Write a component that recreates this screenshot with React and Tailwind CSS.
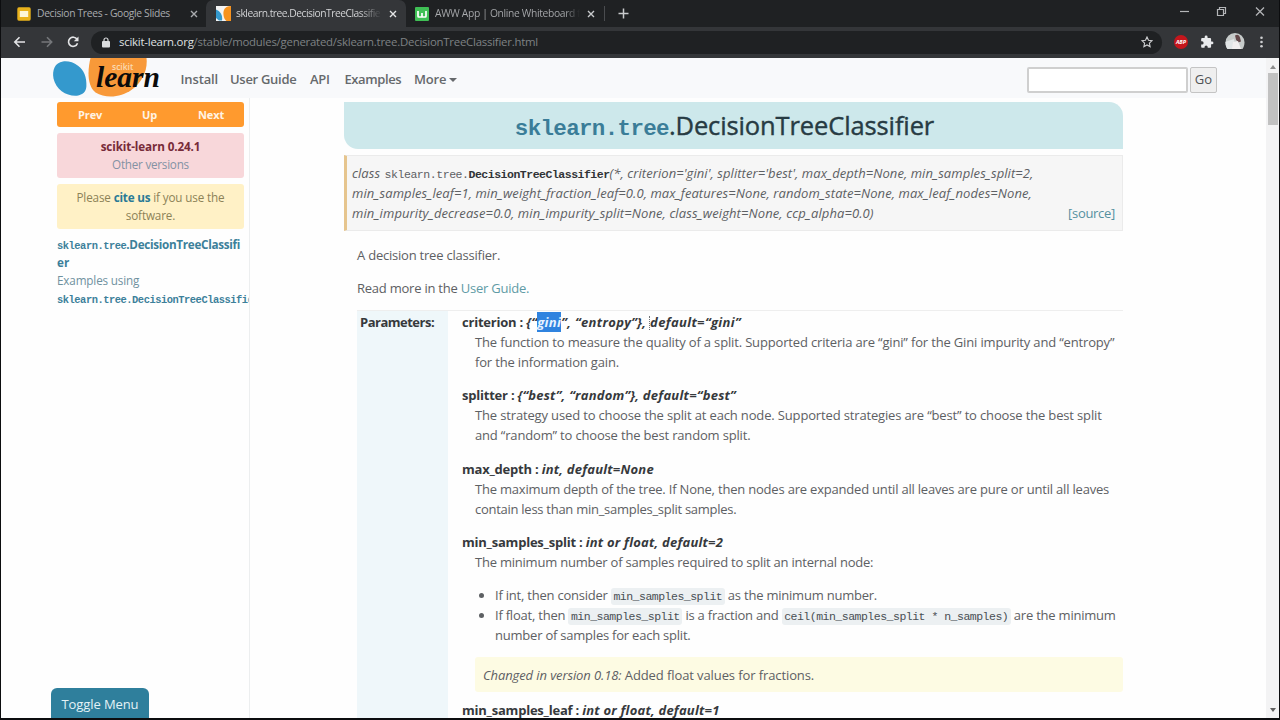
import React from "react";

const mono = "font-['Liberation_Mono',monospace]";

function Slides() {
  return (
    <svg width="14" height="14" viewBox="0 0 14 14" className="shrink-0">
      <rect x="0.3" y="0.3" width="13.4" height="13.4" rx="1.6" fill="#e9b21c" />
      <rect x="2.8" y="4" width="8.4" height="6" fill="#fdf6d8" />
    </svg>
  );
}

function SkFavicon() {
  return (
    <svg width="15" height="15" viewBox="0 0 15 15" className="shrink-0">
      <rect width="15" height="15" fill="#f4f4f4" />
      <path d="M0 3.5C4 5 7 9 6 14.5H3L0 12z" fill="#3499cd" />
      <path d="M15 0C8.500 0 7 4.500 7.500 9c.3 3 1.500 5 3 6H15V0z" fill="#f7931e" />
    </svg>
  );
}

function AwwFavicon() {
  return (
    <svg width="14" height="14" viewBox="0 0 14 14" className="shrink-0">
      <rect width="14" height="14" rx="1" fill="#3fbf55" />
      <path d="M3 4v5.200q0 .8.8.8h6.400q.8 0 .8-.8V4M7 6v4" fill="none" stroke="#fff" strokeWidth="1.700" />
    </svg>
  );
}

function Close({ color = "#c8cacc" }) {
  return (
    <svg width="8" height="8" viewBox="0 0 8 8" className="shrink-0">
      <path d="M1 1l6 6M7 1L1 7" stroke={color} strokeWidth="1.400" />
    </svg>
  );
}

function Tabs() {
  return (
    <div className="flex h-[27px] items-stretch bg-[#1f2123] text-[10.3px] text-[#a9abae]">
      <div className="flex w-[205px] items-center pl-[16px]">
        <Slides />
        <span className="ml-[6px] w-[153px] whitespace-nowrap tracking-[-0.33px]">Decision Trees - Google Slides</span>
        <Close color="#a9abae" />
      </div>
      <div className="flex w-[200px] items-center rounded-t-[7px] bg-[#343639] pl-[10px] text-[#d6d7d9]">
        <SkFavicon />
        <span className="ml-[5px] w-[146px] overflow-hidden whitespace-nowrap bg-gradient-to-r from-[#dcdddf] from-85% to-[#343639] bg-clip-text tracking-[-0.5px] text-transparent">
          sklearn.tree.DecisionTreeClassifie
        </span>
        <span className="ml-[7px] flex"><Close color="#e4e5e6" /></span>
      </div>
      <div className="flex w-[198px] items-center pl-[9px]">
        <AwwFavicon />
        <span className="ml-[6px] w-[145px] overflow-hidden whitespace-nowrap bg-gradient-to-r from-[#a9abae] from-90% to-[#1f2123] bg-clip-text tracking-[-0.34px] text-transparent">
          AWW App | Online Whiteboard f
        </span>
        <span className="ml-[7px] flex"><Close /></span>
      </div>
      <div className="flex w-[36px] items-center">
        <span className="h-[15px] w-px bg-[#4a4c4f]" />
        <svg width="11" height="11" viewBox="0 0 11 11" className="ml-[13px]">
          <path d="M5.500 .5v10M.5 5.500h10" stroke="#c8cacc" strokeWidth="1.500" />
        </svg>
      </div>
      <svg width="90" height="14" viewBox="0 0 90 14" className="mt-[5px] ml-auto mr-[9px]" fill="none" stroke="#b4b6b8">
        <path d="M0 6.500h9" strokeWidth="1.200" />
        <path d="M37.500 4.500h6v6h-6zM39.500 4.500v-2h6v6h-2" strokeWidth="1.200" />
        <path d="M76 2.500l8 8M84 2.500l-8 8" strokeWidth="1.300" />
      </svg>
    </div>
  );
}

function AddressBar() {
  return (
    <div className="flex h-[31px] items-center bg-[#343639] pb-px pl-[12px]">
      <svg width="70" height="14" viewBox="0 0 70 14" fill="none" strokeWidth="1.600" className="shrink-0">
        <path d="M12 7H2M6.500 2.300L1.800 7l4.700 4.700" stroke="#e3e4e6" />
        <path d="M28.500 7h10M34 2.300L38.700 7 34 11.700" stroke="#75777a" />
        <path d="M64 4.300A4.600 4.600 0 1 0 64.500 8.200" stroke="#e3e4e6" />
        <path d="M65.500 1.600v4.700h-4.700z" fill="#e3e4e6" />
      </svg>
      <div className="ml-[8px] flex h-[23px] w-[1071px] items-center rounded-full bg-[#1f2123] pl-[11px]">
        <svg width="8" height="11" viewBox="0 0 8 11" className="shrink-0">
          <rect y="4" width="8" height="6.500" rx="1" fill="#dadcde" />
          <path d="M2 4.500V3a2 2 0 0 1 4 0v1.500" fill="none" stroke="#dadcde" strokeWidth="1.200" />
        </svg>
        <span className="ml-[9px] whitespace-nowrap text-[11.4px] tracking-[-0.23px] text-[#7e8184]">
          <span className="text-[#dfe0e2]">scikit-learn.org</span>/stable/modules/generated/sklearn.tree.DecisionTreeClassifier.html
        </span>
        <svg width="12" height="12" viewBox="0 0 12 12" className="ml-auto mr-[9px]">
          <path d="M6 1l1.500 3.300 3.500.4-2.600 2.400.7 3.500L6 8.900l-3.100 1.700.7-3.500L1 4.700l3.500-.4z" fill="none" stroke="#cdced0" strokeWidth="1.100" />
        </svg>
      </div>
      <div className="ml-[12px] flex size-[14px] items-center justify-center rounded-full bg-[#c4161c] text-[5.5px] font-bold italic text-white">
        ABP
      </div>
      <svg width="14" height="14" viewBox="0 0 24 24" className="ml-[12px]">
        <path d="M20.500 11H19V7c0-1.100-.9-2-2-2h-4V3.500a2.500 2.500 0 0 0-5 0V5H4c-1.100 0-2 .9-2 2v3.800h1.500a2.700 2.700 0 0 1 0 5.400H2V20c0 1.100.9 2 2 2h3.800v-1.500a2.700 2.700 0 0 1 5.400 0V22H17c1.100 0 2-.9 2-2v-4h1.500a2.500 2.500 0 0 0 0-5z" fill="#e9eaec" />
      </svg>
      <svg width="20" height="18" viewBox="0 0 20 18" className="ml-[11px]">
        <defs><clipPath id="avatar"><path d="M10 0a9.500 9.500 0 0 1 9.500 9.500c0 3-1 5-2 6.500H2.500C1.300 14.500.5 12.500.5 9.500A9.500 9.500 0 0 1 10 0z" /></clipPath></defs>
        <g clipPath="url(#avatar)">
          <rect width="20" height="18" fill="#c6cbca" />
          <path d="M0 9L9 6l2 12H0z" fill="#e2e5e6" />
          <path d="M10 2.500q4-2 5 2l1 4-3 1-2-3z" fill="#64484a" />
          <path d="M8 9l5-1 3 8H7z" fill="#f2eeee" />
        </g>
      </svg>
      <svg width="3" height="12" viewBox="0 0 3 12" className="ml-[15px]" fill="#cfd0d2">
        <circle cx="1.500" cy="1.700" r="1.300" /><circle cx="1.500" cy="6" r="1.300" /><circle cx="1.500" cy="10.300" r="1.300" />
      </svg>
    </div>
  );
}

function Logo() {
  return (
    <svg width="112" height="40" viewBox="0 0 112 40" className="shrink-0">
      <path d="M11 3.500C3 4.500 0 12 1.500 20.500 4 32 15 38.500 25 37.700c6-1 9-4 9.400-9.500.5-9-2.400-16-8.400-20.500C21.500 4.300 16 2.900 11 3.500z" fill="#3499cd" />
      <path d="M38.500 0H94.500C96 12 90 24 80 31.500 69 39.500 54 41 43.500 34.500 35 28 35.500 12 38.500 0z" fill="#f89939" />
      <text x="60" y="12" fontSize="8.500" fill="#fbd9b2" className="font-['Open_Sans',sans-serif]">scikit</text>
      <text x="44" y="29" fontSize="29" fontWeight="700" fontStyle="italic" fill="#0b0b0b" textLength="64" lengthAdjust="spacingAndGlyphs" className="font-['Liberation_Serif',serif]">learn</text>
    </svg>
  );
}

function Navbar() {
  return (
    <div className="flex h-[40px] shrink-0 items-center bg-[#f8f9fb] pl-[51px] text-[13px] font-semibold text-[#66696c]">
      <Logo />
      <div className="flex flex-1 items-center pt-[3px]">
        <span className="ml-[16.5px] w-[49.5px] tracking-[-0.13px]">Install</span>
        <span className="w-[80px] whitespace-nowrap tracking-[-0.3px]">User Guide</span>
        <span className="w-[34.5px] tracking-[-0.3px]">API</span>
        <span className="w-[69.5px] tracking-[-0.4px]">Examples</span>
        <span className="tracking-[-0.2px]">More</span>
        <svg width="8" height="4" viewBox="0 0 8 4" className="ml-[3px]"><path d="M0 0h8L4 4z" fill="#66696c" /></svg>
        <div className="ml-auto mr-[49px] flex gap-[2px]">
          <div className="h-[26px] w-[161px] rounded-[2px] border-2 border-[#cfcfcf] bg-white" />
          <div className="flex h-[26px] w-[27px] items-center justify-center rounded-[2px] border-[1.5px] border-[#c4c4c4] bg-[#efefef] text-[13px] font-normal text-[#505254]">Go</div>
        </div>
      </div>
    </div>
  );
}

function Sidebar() {
  return (
    <div className="flex h-[621px] w-[249px] shrink-0 flex-col border-r border-[#eceeef] pl-[56px] pt-[4px] text-[11.7px] leading-[18px]">
      <div className="flex h-[25px] w-[187px] items-center rounded-[3px] bg-[#ff9a2e] text-[11px] font-bold tracking-[-0.1px] text-[#fff3e4]">
        <span className="w-[64px] pl-[21px]">Prev</span>
        <span className="w-[57px] pl-[21px]">Up</span>
        <span className="pl-[20px]">Next</span>
      </div>
      <div className="mt-[6px] h-[45px] w-[187px] rounded-[3px] bg-[#f8d7da] pt-[4px] text-center text-[#8392a4]">
        <div className="font-bold tracking-[-0.12px] text-[#772a38]">scikit-learn 0.24.1</div>
        <div className="tracking-[-0.25px]">Other versions</div>
      </div>
      <div className="mt-[6px] h-[45px] w-[187px] rounded-[3px] bg-[#fff1c6] pt-[4px] text-center tracking-[-0.14px] text-[#8c8257]">
        <div>Please <b className="tracking-[-0.2px] text-[#2a7a96]">cite us</b> if you use the</div>
        <div>software.</div>
      </div>
      <div className="mt-[6px] w-[192px] overflow-hidden whitespace-nowrap text-[#6f919e]">
        <div className="h-[18px] font-bold tracking-[-0.3px] text-[#3c809a]">
          <span className={`${mono} text-[10.4px] leading-none tracking-[-0.46px]`}>sklearn.tree</span>.DecisionTreeClassifi
        </div>
        <div className="font-bold text-[#3c809a]">er</div>
        <div className="tracking-[-0.15px]">Examples using</div>
        <div className={`${mono} pt-[2px] text-[10.4px] font-bold tracking-[-0.46px] text-[#3c809a]`}>sklearn.tree.DecisionTreeClassifi<span className="text-[#8fb4c2]">e</span></div>
      </div>
      <div className="-ml-[6px] mt-auto flex h-[31px] w-[98px] items-center justify-center rounded-t-[6px] bg-[#2f7f9c] text-[13px] tracking-[-0.1px] text-[#e4f2f6]">
        Toggle Menu
      </div>
    </div>
  );
}

function Code({ children }) {
  return <code className={`${mono} rounded-[3px] bg-[#ecf0f2] px-[2.5px] py-[2px] text-[11.5px] leading-none tracking-[-0.5px] text-[#494f54]`}>{children}</code>;
}

function Param({ name, type, typeClass = "tracking-[0.21px]", children }) {
  return (
    <div className="mb-[13.4px] whitespace-nowrap">
      <div className="font-bold tracking-[-0.22px] text-[#36393c]">{name} : <i className={typeClass}>{type}</i></div>
      <div className="pl-[13px]">{children}</div>
    </div>
  );
}

function Signature() {
  return (
    <div className="mt-[6px] h-[76px] whitespace-nowrap border border-l-[3px] border-[#ebebeb] border-l-[#e6c58e] bg-[#f6f6f6] pl-[5px] pt-[7px] italic">
      <div className="h-[20px] tracking-[0.07px]">
        <span className="mr-px">class</span> <span className={`${mono} text-[11.5px] leading-none not-italic tracking-[-0.44px]`}>sklearn.tree.</span>
        <b className={`${mono} text-[11.5px] leading-none not-italic tracking-[-0.49px] text-[#303336]`}>DecisionTreeClassifier</b>
        (*, criterion='gini', splitter='best', max_depth=None, min_samples_split=2,
      </div>
      <div className="tracking-[0.08px]">min_samples_leaf=1, min_weight_fraction_leaf=0.0, max_features=None, random_state=None, max_leaf_nodes=None,</div>
      <div className="flex justify-between pr-[7px] tracking-[0.1px]">
        <span>min_impurity_decrease=0.0, min_impurity_split=None, class_weight=None, ccp_alpha=0.0)</span>
        <span className="not-italic tracking-[-0.3px] text-[#55909f]">[source]</span>
      </div>
    </div>
  );
}

function Article() {
  return (
    <div className="ml-[94px] h-[621px] w-[779px] overflow-hidden pt-[4px] text-[13px] leading-[20px] text-[#5d6063]">
      <div className="flex h-[47px] items-center justify-center whitespace-nowrap rounded-bl-[14px] rounded-tr-[14px] bg-[#cde8eb] pr-[18px] pt-[5px] text-[25.5px] text-[#273b43]">
        <div>
          <span className={`${mono} text-[22.5px] font-bold leading-none tracking-[-0.66px] text-[#3a7d98]`}>sklearn.tree</span>
          <span className="tracking-[-0.12px] [-webkit-text-stroke:0.4px_#273b43]">.DecisionTreeClassifier</span>
        </div>
      </div>
      <Signature />
      <div className="ml-[13px] mt-[14px] tracking-[-0.22px]">A decision tree classifier.</div>
      <div className="ml-[13px] mt-[13px] tracking-[-0.23px]">Read more in the <span className="text-[#609ba5]">User Guide.</span></div>
      <div className="ml-[13px] mt-[12px] flex h-[420px] border-t border-[#eeeeee]">
        <div className="w-[91px] bg-[#eff7fa] pl-[3px] pt-[1px] font-bold tracking-[-0.5px] text-[#36393c]">Parameters:</div>
        <div className="w-[675px] pl-[14px] pt-[1px] tracking-[-0.17px]">
          <Param
            name="criterion"
            typeClass="tracking-[0.35px]"
            type={<>{"{“"}<span className="bg-[#2f83df] py-[1px] text-[#e8f3ff]">gini</span>{"”, “entropy”}, "}<span className="relative">d<span className="absolute -left-px top-[3px] h-[14px] border-l border-dotted border-[#707376]" /></span>{"efault=“gini”"}</>}
          >
            <div className="tracking-[-0.16px]">The function to measure the quality of a split. Supported criteria are “gini” for the Gini impurity and “entropy”</div>
            <div>for the information gain.</div>
          </Param>
          <Param name="splitter" typeClass="tracking-[0.24px]" type="{“best”, “random”}, default=“best”">
            <div className="tracking-[-0.15px]">The strategy used to choose the split at each node. Supported strategies are “best” to choose the best split</div>
            <div>and “random” to choose the best random split.</div>
          </Param>
          <Param name="max_depth" type="int, default=None">
            <div className="tracking-[-0.2px]">The maximum depth of the tree. If None, then nodes are expanded until all leaves are pure or until all leaves</div>
            <div className="tracking-[-0.27px]">contain less than min_samples_split samples.</div>
          </Param>
          <Param name="min_samples_split" type="int or float, default=2">
            <div className="tracking-[-0.22px]">The minimum number of samples required to split an internal node:</div>
            <ul className="mt-[13px] list-disc pl-[20px] tracking-[-0.22px]">
              <li className="h-[20px]">If int, then consider <Code>min_samples_split</Code> as the minimum number.</li>
              <li>If float, then <Code>min_samples_split</Code> is a fraction and <Code>ceil(min_samples_split * n_samples)</Code> are the minimum<br />number of samples for each split.</li>
            </ul>
            <div className="-mb-[6px] mt-[12px] flex h-[35px] w-[648px] items-center rounded-[3px] bg-[#fdfbe3] pl-[8px] pt-px">
              <span className="tracking-[-0.1px]"><i className="tracking-[-0.1px]">Changed in version 0.18:</i> Added float values for fractions.</span>
            </div>
          </Param>
          <Param name="min_samples_leaf" type="int or float, default=1" />
        </div>
      </div>
    </div>
  );
}

function Scrollbar() {
  return (
    <div className="ml-auto flex h-[660px] w-[13px] flex-col items-center bg-[#f3f3f4]">
      <svg width="6" height="4" viewBox="0 0 6 4" className="mt-[7px]"><path d="M0 4l3-4 3 4z" fill="#8b8b8b" /></svg>
      <div className="mt-[4px] h-[52px] w-[10px] bg-[#c1c1c1]" />
      <svg width="6" height="4" viewBox="0 0 6 4" className="mb-[6px] mt-auto"><path d="M0 0l3 4 3-4z" fill="#606060" /></svg>
    </div>
  );
}

export default function App() {
  return (
    <div className="h-[720px] w-[1280px] overflow-hidden bg-[#0c0d0f] pl-px pr-[1px] font-['Open_Sans','Noto_Sans',sans-serif]">
      <Tabs />
      <AddressBar />
      <div className="flex h-[660px] overflow-hidden bg-[#fefefe]">
        <div className="w-[1265px] shrink-0">
          <Navbar />
          <div className="flex">
            <Sidebar />
            <Article />
          </div>
        </div>
        <Scrollbar />
      </div>
    </div>
  );
}
